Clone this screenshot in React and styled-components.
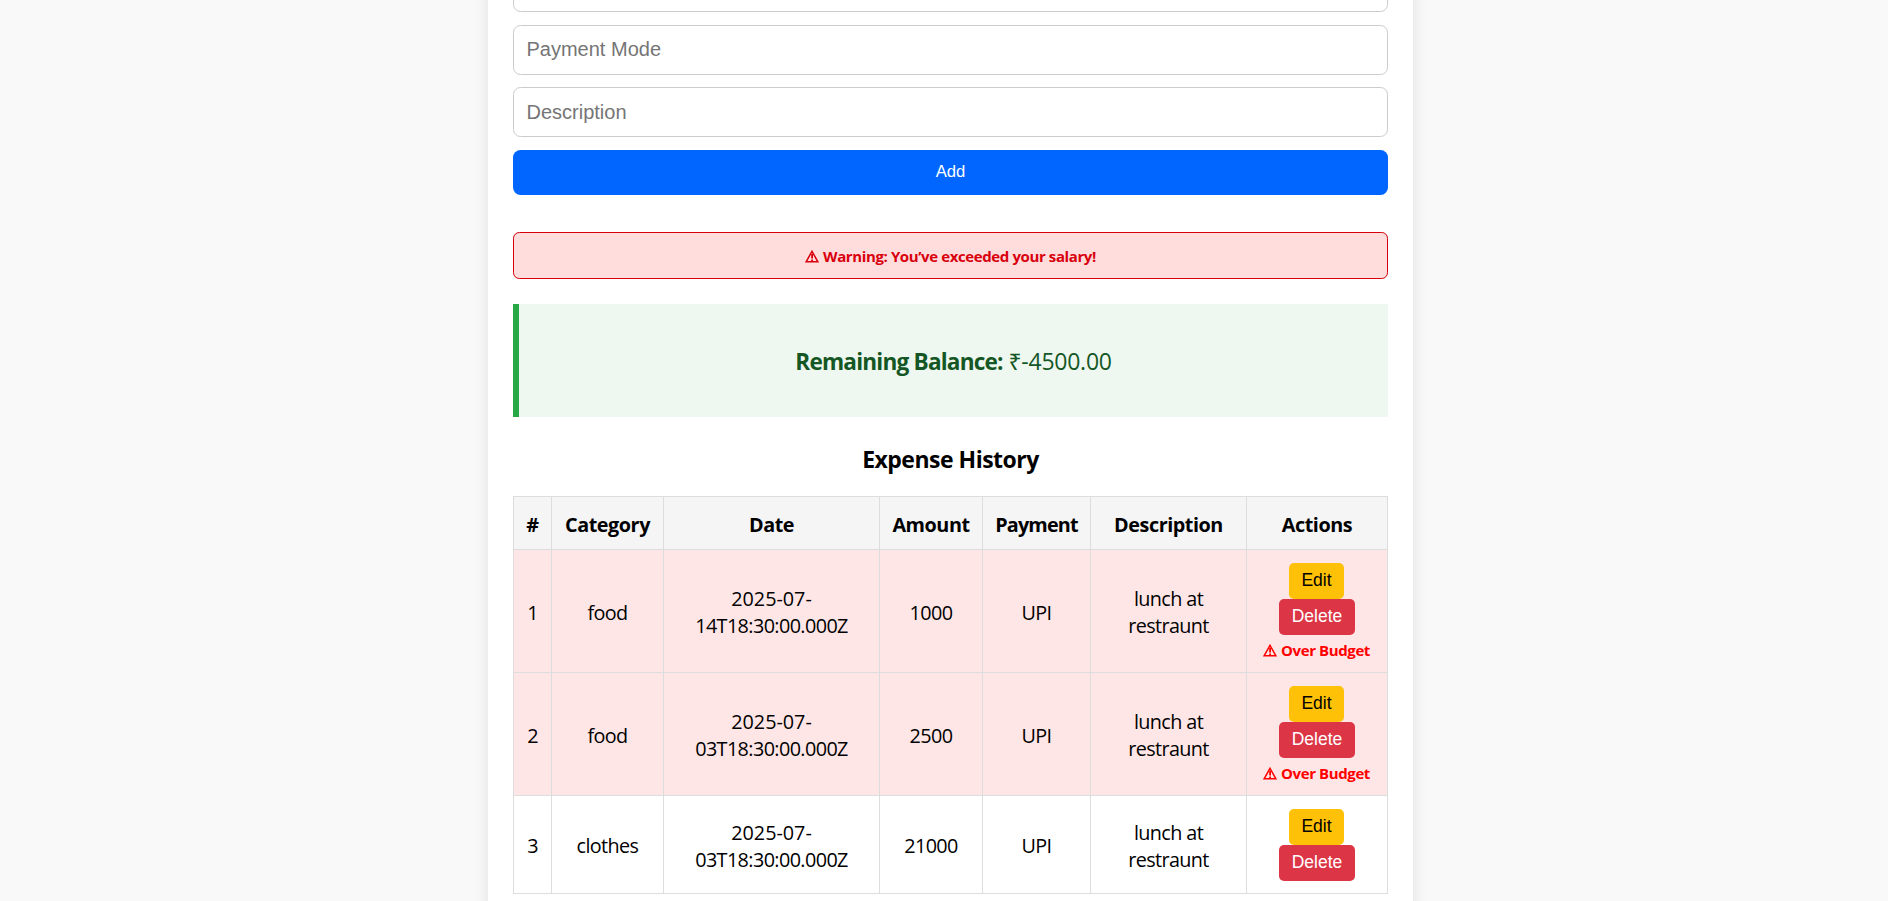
import React from 'react';
import styled, { createGlobalStyle } from 'styled-components';

const GlobalStyle = createGlobalStyle`
  * { box-sizing: border-box; }
  html, body { margin: 0; height: 901px; overflow: hidden; }
  body {
    background: #f9f9f9;
    color: #000;
    font-family: "Open Sans", "Noto Sans", sans-serif;
    font-size: 20px;
  }
`;

const Page = styled.div`
  display: flex;
  justify-content: center;
  height: 901px;
  padding-left: 13px;
  overflow: hidden;
`;

const Card = styled.main`
  width: 925px;
  height: 960px;
  margin-top: -38px;
  padding: 0 25px;
  flex: none;
  background: #fff;
  box-shadow: 0 0 15px rgba(0, 0, 0, 0.1);
`;

const Form = styled.form`
  display: flex;
  flex-direction: column;
  gap: 12px;
`;

const Field = styled.input`
  display: block;
  width: 100%;
  height: 50px;
  padding: 0 12.5px;
  border: 1px solid #ccc;
  border-radius: 7.5px;
  background: #fff;
  font-family: "Liberation Sans", Arial, sans-serif;
  font-size: 20px;
  outline: none;
  &:first-child { margin-bottom: 1px; }
  &:nth-child(2) { padding-bottom: 2px; }
  &::placeholder { color: #757575; opacity: 1; }
`;

const AddButton = styled.button`
  height: 45px;
  margin-top: 1px;
  padding: 0 0 2px;
  border: 0;
  border-radius: 7.5px;
  background: #06f;
  color: #fff;
  font-family: "Liberation Sans", Arial, sans-serif;
  font-size: 16.67px;
`;

const Alert = styled.div`
  display: flex;
  align-items: center;
  justify-content: center;
  gap: 4px;
  height: 47px;
  margin-top: 37px;
  padding-top: 1px;
  border: 1px solid #d8000c;
  border-radius: 6.25px;
  background: #ffdddd;
  color: #d8000c;
  font-size: 15px;
  font-weight: 700;
  letter-spacing: -0.39px;
`;

const Balance = styled.section`
  height: 113px;
  margin-top: 25px;
  border-left: 6px solid #28a745;
  background: #eef8f1;
  color: #155724;
  font-size: 23px;
  line-height: 115px;
  text-align: center;
  letter-spacing: -0.25px;
  white-space: pre;
`;

const BalanceLabel = styled.strong`
  font-size: 22.6px;
  font-weight: 670;
  letter-spacing: -0.8px;
`;

const Heading = styled.h3`
  margin: 25px 0 20px;
  height: 34px;
  line-height: 34px;
  text-align: center;
  font-size: 23px;
  font-weight: 700;
  letter-spacing: -0.5px;
`;

const Table = styled.table`
  width: 875px;
  table-layout: fixed;
  border-collapse: collapse;
  text-align: center;
`;

const Col = styled.col`
  width: ${(p) => p.$w}px;
`;

const HeadCell = styled.th`
  height: 53px;
  padding: 3px 0 0;
  border: 1px solid #ddd;
  background: #f5f5f5;
  font-size: 19.8px;
  font-weight: 680;
  line-height: 27px;
  letter-spacing: ${(p) => p.$tracking ?? -0.45}px;
`;

const Row = styled.tr`
  height: ${(p) => (p.$over ? 123 : 98)}px;
  background: ${(p) => (p.$over ? '#ffe6e6' : '#fff')};
`;

const Cell = styled.td`
  padding: 2px 12px 0;
  border: 1px solid #ddd;
  font-size: 19.8px;
  line-height: 27px;
  letter-spacing: -0.6px;
  vertical-align: middle;
`;

const Day = styled.span`
  letter-spacing: 0;
`;

const ActionCell = styled.td`
  padding: 0;
  border: 1px solid #ddd;
  vertical-align: middle;
`;

const Actions = styled.div`
  display: flex;
  flex-direction: column;
  align-items: center;
`;

const ActionButton = styled.button`
  height: 36px;
  margin-right: ${(p) => (p.$danger ? 0 : 1)}px;
  padding: 0 12.4px 1px;
  border: 0;
  border-radius: 5px;
  background: ${(p) => (p.$danger ? '#dc3545' : '#ffc107')};
  color: ${(p) => (p.$danger ? '#fff' : '#000')};
  font-family: "Liberation Sans", Arial, sans-serif;
  font-size: 17.5px;
`;

const OverBudget = styled.div`
  display: flex;
  align-items: center;
  justify-content: center;
  gap: 4px;
  height: 20px;
  margin: 5px 1px 0 0;
  color: #f00;
  font-size: 15px;
  font-weight: 700;
  line-height: 20px;
  letter-spacing: -0.4px;
`;

const Icon = styled.svg`
  width: 14px;
  height: 13px;
  margin-top: 1px;
  flex: none;
`;

function WarningIcon() {
  return (
    <Icon viewBox="0 0 14 13" fill="none" stroke="currentColor">
      <path d="M7 1.3 L12.9 11.8 H1.1 Z" strokeWidth="1.5" strokeLinejoin="miter" />
      <path d="M7.1 4 V8.6 M7.1 9.6 V11.4" strokeWidth="1.8" />
    </Icon>
  );
}

const columns = [
  ['#', 38],
  ['Category', 112],
  ['Date', 216],
  ['Amount', 103],
  ['Payment', 108, -0.8],
  ['Description', 156],
  ['Actions', 141],
];

const expenses = [
  { category: 'food', day: '2025-07-', time: '14T18:30:00.000Z', amount: 1000, over: true },
  { category: 'food', day: '2025-07-', time: '03T18:30:00.000Z', amount: 2500, over: true },
  { category: 'clothes', day: '2025-07-', time: '03T18:30:00.000Z', amount: 21000, over: false },
];

export default function App() {
  return (
    <>
      <GlobalStyle />
      <Page>
        <Card>
          <Form>
            <Field />
            <Field placeholder="Payment Mode" />
            <Field placeholder="Description" />
            <AddButton type="button">Add</AddButton>
          </Form>
          <Alert>
            <WarningIcon />
            <span>Warning: You’ve exceeded your salary!</span>
          </Alert>
          <Balance>
            <BalanceLabel>Remaining Balance:</BalanceLabel>
            <span> ₹-4500.00</span>
          </Balance>
          <Heading>Expense History</Heading>
          <Table>
            <colgroup>
              {columns.map(([name, width]) => (
                <Col key={name} $w={width} />
              ))}
            </colgroup>
            <thead>
              <tr>
                {columns.map(([name, , tracking]) => (
                  <HeadCell key={name} $tracking={tracking}>{name}</HeadCell>
                ))}
              </tr>
            </thead>
            <tbody>
              {expenses.map((e, i) => (
                <Row key={i} $over={e.over}>
                  <Cell>{i + 1}</Cell>
                  <Cell>{e.category}</Cell>
                  <Cell><Day>{e.day}</Day>{e.time}</Cell>
                  <Cell>{e.amount}</Cell>
                  <Cell>UPI</Cell>
                  <Cell>lunch at restraunt</Cell>
                  <ActionCell>
                    <Actions>
                      <ActionButton>Edit</ActionButton>
                      <ActionButton $danger>Delete</ActionButton>
                      {e.over && (
                        <OverBudget>
                          <WarningIcon />
                          <span>Over Budget</span>
                        </OverBudget>
                      )}
                    </Actions>
                  </ActionCell>
                </Row>
              ))}
            </tbody>
          </Table>
        </Card>
      </Page>
    </>
  );
}
